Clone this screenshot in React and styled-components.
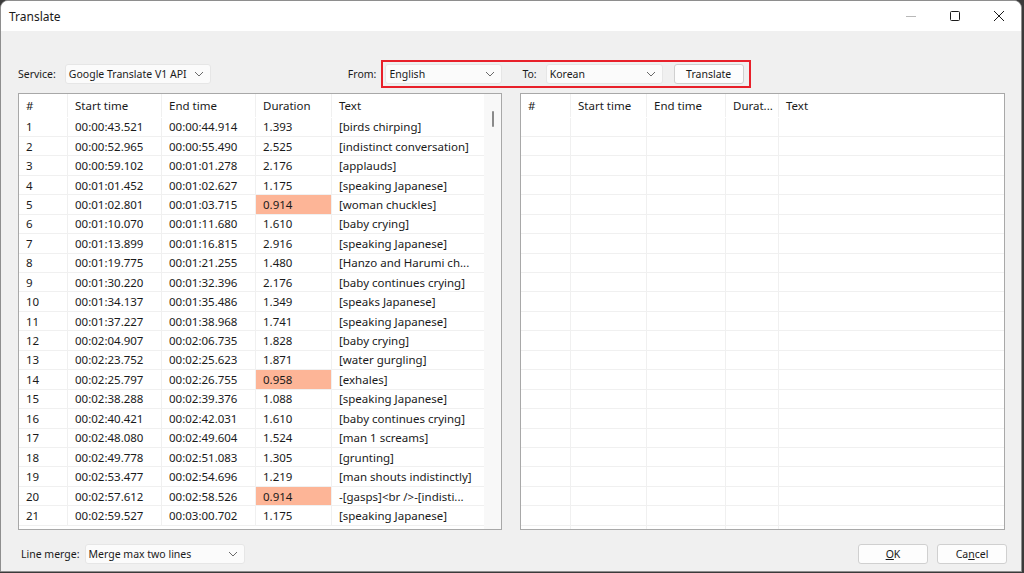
import React from "react";
import styled, { createGlobalStyle } from "styled-components";

const GlobalStyle = createGlobalStyle`
  html, body {
    margin: 0;
    padding: 0;
    background: #3a3a3a;
    font-family: "Noto Sans", "Open Sans", sans-serif;
  }
  * { box-sizing: border-box; }
`;

const rows = [
  ["1", "00:00:43.521", "00:00:44.914", "1.393", "[birds chirping]"],
  ["2", "00:00:52.965", "00:00:55.490", "2.525", "[indistinct conversation]"],
  ["3", "00:00:59.102", "00:01:01.278", "2.176", "[applauds]"],
  ["4", "00:01:01.452", "00:01:02.627", "1.175", "[speaking Japanese]"],
  ["5", "00:01:02.801", "00:01:03.715", "0.914", "[woman chuckles]", true],
  ["6", "00:01:10.070", "00:01:11.680", "1.610", "[baby crying]"],
  ["7", "00:01:13.899", "00:01:16.815", "2.916", "[speaking Japanese]"],
  ["8", "00:01:19.775", "00:01:21.255", "1.480", "[Hanzo and Harumi ch..."],
  ["9", "00:01:30.220", "00:01:32.396", "2.176", "[baby continues crying]"],
  ["10", "00:01:34.137", "00:01:35.486", "1.349", "[speaks Japanese]"],
  ["11", "00:01:37.227", "00:01:38.968", "1.741", "[speaking Japanese]"],
  ["12", "00:02:04.907", "00:02:06.735", "1.828", "[baby crying]"],
  ["13", "00:02:23.752", "00:02:25.623", "1.871", "[water gurgling]"],
  ["14", "00:02:25.797", "00:02:26.755", "0.958", "[exhales]", true],
  ["15", "00:02:38.288", "00:02:39.376", "1.088", "[speaking Japanese]"],
  ["16", "00:02:40.421", "00:02:42.031", "1.610", "[baby continues crying]"],
  ["17", "00:02:48.080", "00:02:49.604", "1.524", "[man 1 screams]"],
  ["18", "00:02:49.778", "00:02:51.083", "1.305", "[grunting]"],
  ["19", "00:02:53.477", "00:02:54.696", "1.219", "[man shouts indistinctly]"],
  ["20", "00:02:57.612", "00:02:58.526", "0.914", "-[gasps]<br />-[indisti...", true],
  ["21", "00:02:59.527", "00:03:00.702", "1.175", "[speaking Japanese]"],
];

const Window = styled.div`
  width: 1022px;
  height: 572px;
  display: flex;
  flex-direction: column;
  background: #f0f0f0;
  border: 1px solid #8e8e8e;
  border-radius: 8px 8px 0 0;
  overflow: hidden;
`;

const TitleBar = styled.div`
  height: 30px;
  flex: none;
  background: #ffffff;
  display: flex;
  align-items: center;
  padding-left: 8px;
  font-family: "Noto Sans", sans-serif;
  font-size: 12px;
  color: #1a1a1a;
`;

const Title = styled.span`
  flex: 1;
`;

const Caption = styled.div`
  width: 44px;
  height: 30px;
  display: flex;
  align-items: center;
  justify-content: center;
`;

const Body = styled.div`
  flex: 1;
  display: flex;
  flex-direction: column;
  padding: 29px 14px 7px 17px;
`;

const Toolbar = styled.div`
  display: flex;
  align-items: center;
  height: 28px;
`;

const Label = styled.span`
  font-size: 10.5px;
  color: #1a1a1a;
  margin-right: ${(p) => p.$gap || 8}px;
  margin-left: ${(p) => p.$left || 0}px;
`;

const SelectBox = styled.div`
  width: ${(p) => p.$w}px;
  height: 20px;
  background: #fbfbfb;
  border: 1px solid #e6e6e6;
  border-radius: 3px;
  display: flex;
  align-items: center;
  justify-content: space-between;
  padding: 0 6px 0 3px;
  font-size: 10.5px;
  color: #1a1a1a;
`;

const Chevron = () => (
  <svg width="10" height="6" viewBox="0 0 10 6">
    <path d="M1 1 L5 5 L9 1" fill="none" stroke="#6a6a6a" strokeWidth="1" />
  </svg>
);

const Select = ({ w, children }) => (
  <SelectBox $w={w}>
    <span>{children}</span>
    <Chevron />
  </SelectBox>
);

const Highlight = styled.div`
  display: flex;
  align-items: center;
  height: 28px;
  padding: 0 5px 0 2px;
  border: 2px solid #e8202a;
`;

const Button = styled.button`
  width: ${(p) => p.$w}px;
  height: ${(p) => p.$h}px;
  background: #fdfdfd;
  border: 1px solid #d0d0d0;
  border-radius: 3px;
  font-family: "Noto Sans", sans-serif;
  font-size: 10.5px;
  color: #1a1a1a;
  padding: 0;
  margin-left: ${(p) => p.$left || 0}px;
`;

const Panels = styled.div`
  display: flex;
  gap: 18px;
  margin-top: 5px;
  height: 437px;
`;

const Table = styled.div`
  width: ${(p) => p.$w}px;
  height: 100%;
  background: #ffffff;
  border: 1px solid #a8a8a8;
  display: flex;
  position: relative;
  overflow: hidden;
`;

const Grid = styled.div`
  flex: 1;
  display: flex;
  flex-direction: column;
`;

const Row = styled.div`
  display: grid;
  grid-template-columns: ${(p) => p.$cols};
  height: ${(p) => (p.$head ? 23.5 : 19.45)}px;
  flex: none;
  border-bottom: 1px solid ${(p) => (p.$head ? "transparent" : "#f0f0f0")};
`;

const Cell = styled.div`
  padding-left: 7px;
  display: flex;
  align-items: center;
  font-size: 11.5px;
  color: #1a1a1a;
  white-space: nowrap;
  overflow: hidden;
  border-right: 1px solid ${(p) => (p.$last ? "transparent" : "#f0f0f0")};
  background: ${(p) => (p.$hot ? "#fdb597" : "transparent")};
`;

const Filler = styled.div`
  flex: 1;
  display: grid;
  grid-template-columns: ${(p) => p.$cols};
`;

const FillCol = styled.div`
  border-right: 1px solid ${(p) => (p.$last ? "transparent" : "#f0f0f0")};
`;

const ScrollTrack = styled.div`
  width: 17px;
  flex: none;
  background: #f8f8f8;
  position: relative;
`;

const Thumb = styled.div`
  position: absolute;
  left: 8px;
  top: 17px;
  width: 2px;
  height: 16px;
  background: #8a8a8a;
  border-radius: 1px;
`;

const Footer = styled.div`
  display: flex;
  align-items: center;
  margin-top: 12px;
  height: 24px;
`;

const Spacer = styled.div`
  flex: 1;
`;

const leftCols = "49px 94px 94px 76px 1fr";
const rightCols = "50px 76px 79px 53px 1fr";
const headers = ["#", "Start time", "End time", "Duration", "Text"];
const rightHeaders = ["#", "Start time", "End time", "Durat...", "Text"];

export default function App() {
  return (
    <>
      <GlobalStyle />
      <Window>
        <TitleBar>
          <Title>Translate</Title>
          <Caption>
            <svg width="12" height="12" viewBox="0 0 12 12">
              <path d="M1 6.5 H11" stroke="#b8b8b8" strokeWidth="1" />
            </svg>
          </Caption>
          <Caption>
            <svg width="12" height="12" viewBox="0 0 12 12">
              <rect x="1.5" y="1.5" width="9" height="9" rx="1" fill="none" stroke="#1a1a1a" strokeWidth="1" />
            </svg>
          </Caption>
          <Caption>
            <svg width="12" height="12" viewBox="0 0 12 12">
              <path d="M1 1 L11 11 M11 1 L1 11" stroke="#1a1a1a" strokeWidth="1" />
            </svg>
          </Caption>
        </TitleBar>
        <Body>
          <Toolbar>
            <Label $gap={9}>Service:</Label>
            <Select w={146}>Google Translate V1 API</Select>
            <Label $left={137} $gap={5}>From:</Label>
            <Highlight>
              <Select w={117}>English</Select>
              <Label $left={20} $gap={9}>To:</Label>
              <Select w={117}>Korean</Select>
              <Button $w={70} $h={20} $left={11}>Translate</Button>
            </Highlight>
          </Toolbar>
          <Panels>
            <Table $w={484}>
              <Grid>
                <Row $head $cols={leftCols}>
                  {headers.map((h, i) => (
                    <Cell key={h} $last={i === 4}>{h}</Cell>
                  ))}
                </Row>
                {rows.map((r) => (
                  <Row key={r[0]} $cols={leftCols}>
                    {r.slice(0, 5).map((v, i) => (
                      <Cell key={i} $last={i === 4} $hot={i === 3 && r[5]}>{v}</Cell>
                    ))}
                  </Row>
                ))}
              </Grid>
              <ScrollTrack>
                <Thumb />
              </ScrollTrack>
            </Table>
            <Table $w={485}>
              <Grid>
                <Row $head $cols={rightCols}>
                  {rightHeaders.map((h, i) => (
                    <Cell key={h} $last={i === 4}>{h}</Cell>
                  ))}
                </Row>
                {rows.map((r) => (
                  <Row key={r[0]} $cols={rightCols}>
                    {[0, 1, 2, 3, 4].map((i) => (
                      <Cell key={i} $last={i === 4} />
                    ))}
                  </Row>
                ))}
                <Filler $cols={rightCols}>
                  {[0, 1, 2, 3, 4].map((i) => (
                    <FillCol key={i} $last={i === 4} />
                  ))}
                </Filler>
              </Grid>
            </Table>
          </Panels>
          <Footer>
            <Label $left={3} $gap={5}>Line merge:</Label>
            <Select w={160}>Merge max two lines</Select>
            <Spacer />
            <Button $w={70} $h={20}><u>O</u>K</Button>
            <Button $w={70} $h={20} $left={9}>Ca<u>n</u>cel</Button>
          </Footer>
        </Body>
      </Window>
    </>
  );
}
